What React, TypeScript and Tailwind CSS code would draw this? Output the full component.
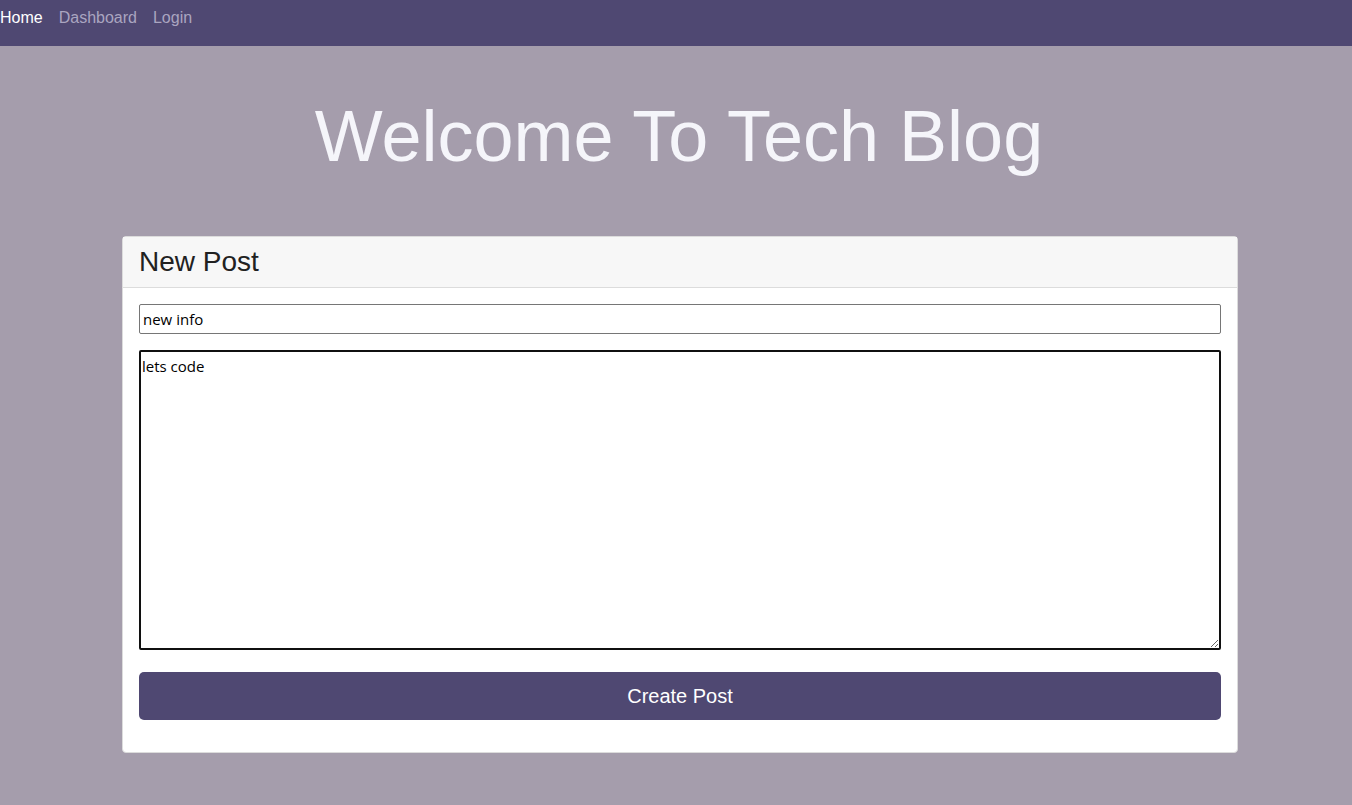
import { useState } from "react";

export default function App() {
  const [title, setTitle] = useState("new info");
  const [body, setBody] = useState("lets code ");

  return (
    <div className="min-h-screen bg-[#a59dac] font-['Liberation_Sans',Arial,sans-serif]">
      <nav className="flex h-[46px] items-start gap-4 bg-[#4f4872] pt-[6px] text-[16px]">
        <a className="text-white">Home</a>
        <a className="text-[#aaa5c0]">Dashboard</a>
        <a className="text-[#aaa5c0]">Login</a>
      </nav>

      <h1 className="mt-[49px] pl-[6px] text-center text-[72px] leading-[82px] text-[#f5f5fa]">
        Welcome To Tech Blog
      </h1>

      <div className="mt-[59px] ml-[122px] w-[1116px] rounded border border-[#dcdcdc] bg-white">
        <div className="h-[51px] border-b border-[#dcdcdc] bg-[#f7f7f7] px-4 pt-[8px] text-[28px] leading-[34px] text-[#212121]">
          New Post
        </div>
        <form className="flex flex-col px-4 pt-4 pb-8">
          <input
            value={title}
            onChange={(e) => setTitle(e.target.value)}
            className="h-[30px] rounded-[2px] border border-[#767676] px-[3px] font-['Open_Sans',sans-serif] text-[15px] text-black outline-none"
          />
          <textarea
            value={body}
            onChange={(e) => setBody(e.target.value)}
            className="mt-4 h-[300px] rounded-[2px] border-2 border-[#101010] px-[1px] pt-[4px] pb-[2px] font-['Open_Sans',sans-serif] text-[15px] leading-[20px] text-black outline-none"
          />
          <button
            type="button"
            className="mt-[22px] h-[48px] rounded-[5px] bg-[#4f4872] text-[20px] text-white"
          >
            Create Post
          </button>
        </form>
      </div>
    </div>
  );
}
